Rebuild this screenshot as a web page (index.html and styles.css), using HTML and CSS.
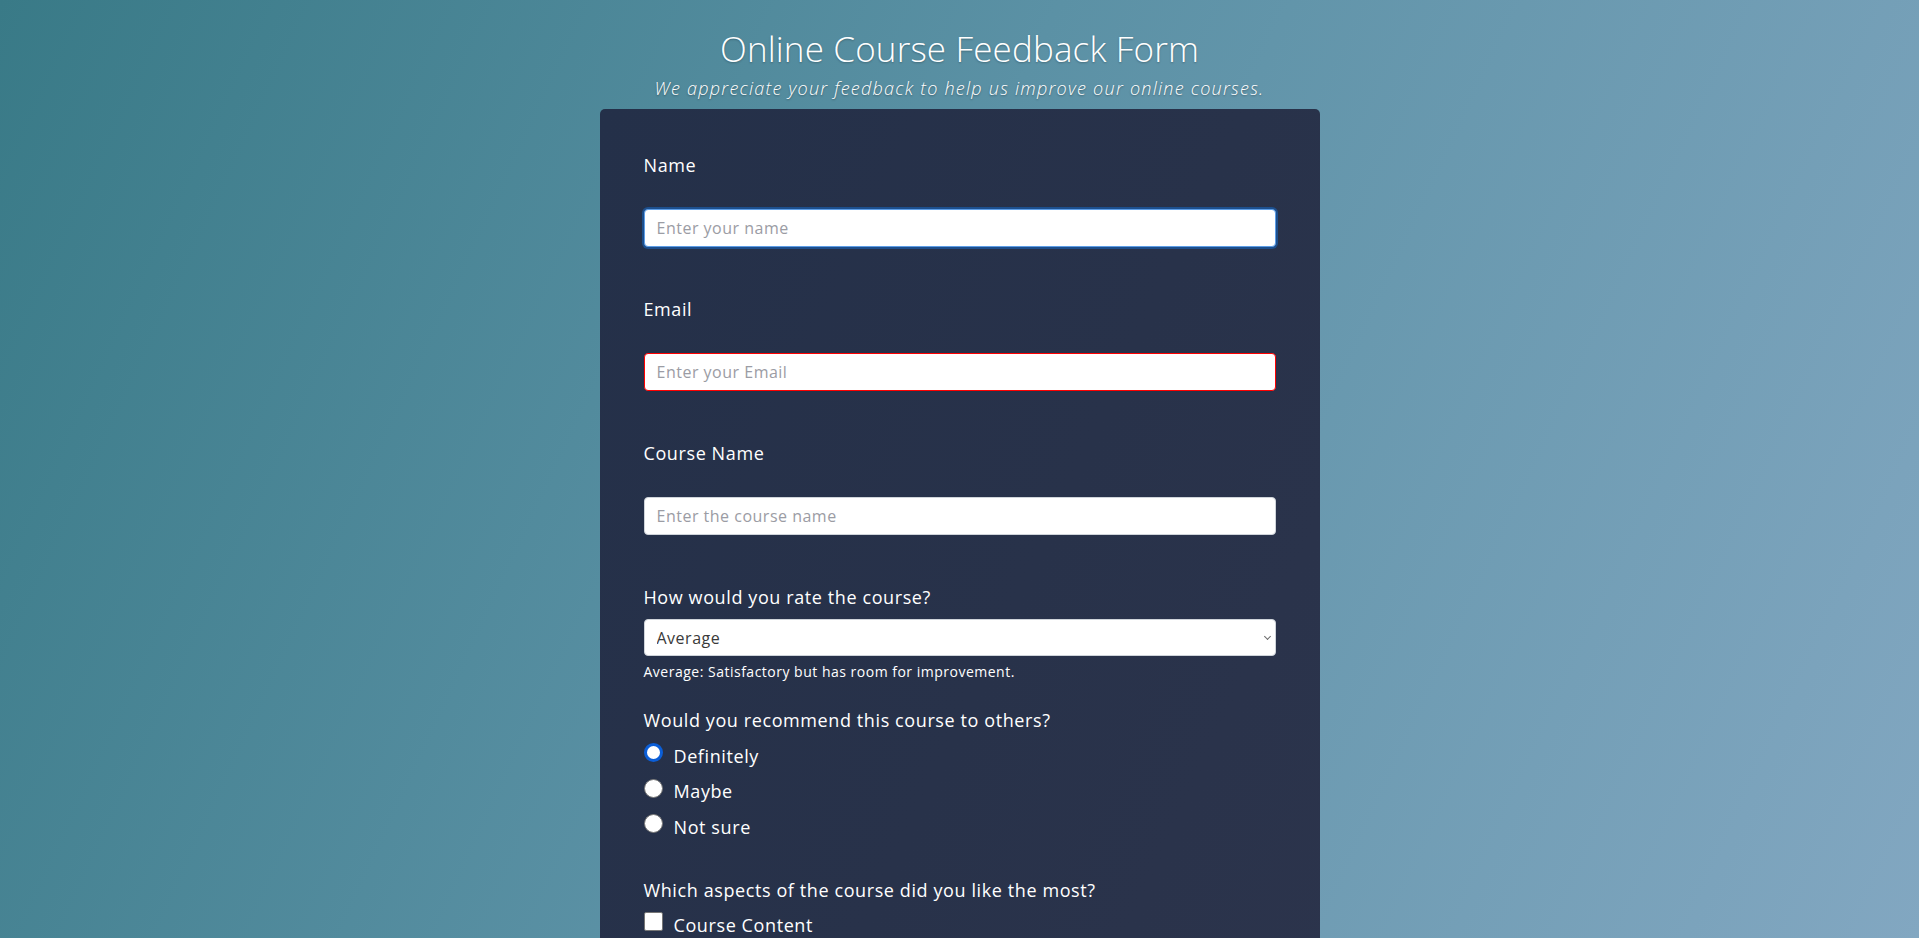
FILE: index.html
```html
<!DOCTYPE html>
<html lang="en">
<head>
<meta charset="utf-8">
<title>Online Course Feedback Form</title>
<link rel="stylesheet" href="styles.css">
</head>
<body>
  <header class="header">
    <h1 class="title">Online Course Feedback Form</h1>
    <p class="subtitle">We appreciate your feedback to help us improve our online courses.</p>
  </header>
  <form class="card">
    <div class="field">
      <label class="label" for="name">Name</label>
      <input class="input input-focus" id="name" type="text" placeholder="Enter your name">
    </div>
    <div class="field">
      <label class="label" for="email">Email</label>
      <input class="input input-invalid" id="email" type="email" placeholder="Enter your Email">
    </div>
    <div class="field">
      <label class="label" for="course">Course Name</label>
      <input class="input" id="course" type="text" placeholder="Enter the course name">
    </div>
    <div class="field-rating">
      <label class="label label-tight" for="rating">How would you rate the course?</label>
      <div class="select-wrap">
        <select class="select" id="rating">
          <option>Excellent</option>
          <option>Good</option>
          <option selected>Average</option>
          <option>Poor</option>
        </select>
      </div>
      <p class="help">Average: Satisfactory but has room for improvement.</p>
    </div>
    <div class="group">
      <p class="question">Would you recommend this course to others?</p>
      <label class="option"><input class="radio radio-active" type="radio" name="rec"><span>Definitely</span></label>
      <label class="option"><input class="radio" type="radio" name="rec"><span>Maybe</span></label>
      <label class="option"><input class="radio" type="radio" name="rec"><span>Not sure</span></label>
    </div>
    <div class="group">
      <p class="question">Which aspects of the course did you like the most?</p>
      <label class="option"><input class="check" type="checkbox"><span>Course Content</span></label>
      <label class="option"><input class="check" type="checkbox"><span>Instructor</span></label>
      <label class="option"><input class="check" type="checkbox"><span>Assignments</span></label>
      <label class="option"><input class="check" type="checkbox"><span>Community</span></label>
    </div>
  </form>
</body>
</html>
```

FILE: styles.css
```css
html {
  min-height: 100%;
}

body {
  margin: 0;
  min-height: 100vh;
  font-family: "Open Sans", "Noto Sans", sans-serif;
  color: #ffffff;
  background: linear-gradient(115deg, #397a87 0%, #5b91a5 45%, #82a7c1 100%) fixed;
  padding-bottom: 60px;
}

.header {
  text-align: center;
  padding-top: 28px;
}

.title {
  margin: 0;
  font-size: 35px;
  line-height: 42px;
  font-weight: 300;
  letter-spacing: 0.15px;
  text-shadow: 0 1px 2px rgba(0, 0, 0, 0.25);
}

.subtitle {
  margin: 5px 0 0;
  font-size: 18px;
  line-height: 27px;
  font-weight: 300;
  font-style: italic;
  letter-spacing: 1.25px;
  text-shadow: 0 1px 2px rgba(0, 0, 0, 0.35);
}

.card {
  box-sizing: border-box;
  width: 720px;
  margin: 7px auto 0;
  padding: 43px 44px 44px;
  border-radius: 5px;
  background: linear-gradient(115deg, #243049 0%, #28324a 55%, #2c344c 100%);
}

.field {
  margin-bottom: 49px;
}

.label {
  display: block;
  font-size: 18px;
  line-height: 27px;
  letter-spacing: 0.6px;
  margin-bottom: 30px;
}

.label-tight {
  margin-bottom: 8px;
}

.input,
.select {
  display: block;
  box-sizing: border-box;
  width: 100%;
  height: 38px;
  padding: 0 12px;
  font-family: inherit;
  font-size: 16px;
  letter-spacing: 0.5px;
  color: #333;
  background: #fff;
  border: 1px solid #cfd4da;
  border-radius: 4px;
  outline: none;
}

.input::placeholder {
  color: #9b9ca4;
}

.input-focus {
  border-color: #5d9de6;
  box-shadow: 0 0 0 2px #1d4f8d;
}

.input-invalid {
  border-color: #ff0000;
}

.select-wrap {
  position: relative;
}

.select-wrap::after {
  content: "";
  position: absolute;
  right: 6px;
  top: 15px;
  width: 4px;
  height: 4px;
  border-right: 1px solid #6b6b6b;
  border-bottom: 1px solid #6b6b6b;
  transform: rotate(45deg);
  pointer-events: none;
}

.select {
  appearance: none;
  -webkit-appearance: none;
  height: 37px;
  color: #3a3a3a;
}

.help {
  margin: 5px 0 0;
  font-size: 14px;
  line-height: 21px;
  letter-spacing: 0.5px;
}

.group {
  margin-top: 25px;
}

.group + .group {
  margin-top: 36px;
}

.question {
  margin: 0;
  font-size: 18px;
  line-height: 27px;
  letter-spacing: 0.6px;
}

.option {
  display: flex;
  align-items: center;
  margin-top: 8.5px;
  font-size: 18px;
  line-height: 27px;
  letter-spacing: 0.6px;
}

.radio,
.check {
  appearance: none;
  -webkit-appearance: none;
  flex: none;
  box-sizing: border-box;
  margin: 0 11px 7px 0;
  background: #fff;
}

.radio {
  width: 19px;
  height: 19px;
  border-radius: 50%;
  border: 1px solid #767676;
}

.radio-active {
  border: 3px solid #0b5ed7;
}

.check {
  width: 19px;
  height: 19px;
  border: 1px solid #767676;
  border-radius: 2px;
  margin-bottom: 8px;
}
```
